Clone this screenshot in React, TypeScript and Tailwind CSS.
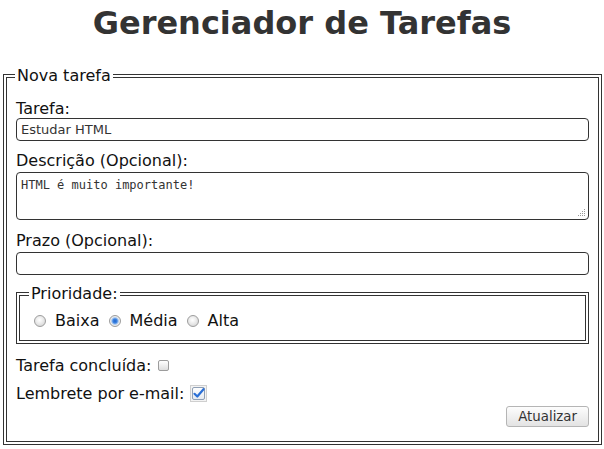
import React from "react";

function Radio({ checked }: { checked?: boolean }) {
  return (
    <span
      className={
        "inline-block w-[12px] h-[12px] shrink-0 rounded-full border border-[#9d9d9d] " +
        (checked
          ? "bg-[image:radial-gradient(circle,#1f63c9_0%,#3f86e4_30%,#9fc2ee_45%,#eeeeee_62%,#d2d2d2_100%)]"
          : "bg-[image:radial-gradient(circle_at_45%_40%,#ffffff_0%,#efefef_35%,#cdcdcd_100%)]")
      }
    />
  );
}

export default function App() {
  return (
    <div className="w-[604px] h-[449px] bg-white overflow-hidden font-['DejaVu_Sans',sans-serif] text-[16px] text-[#111]">
      <h1 className="pt-[5px] text-center text-[32px] leading-[37px] font-bold text-[#333]">
        Gerenciador de Tarefas
      </h1>
      <fieldset className="mt-[24px] ml-[3px] mr-[2px] border-4 border-double border-[#333] pl-[9px] pr-[9px] pt-[15px] pb-[14px]">
        <legend className="leading-[19px] px-[2px] -ml-[1px]">Nova tarefa</legend>

        <label className="block leading-[18px]">Tarefa:</label>
        <input
          type="text"
          defaultValue="Estudar HTML"
          className="block w-full h-[23px] border border-[#333] rounded-[4px] px-[4px] text-[13px] text-[#333] outline-none"
        />

        <label className="block leading-[18px] mt-[11px] mb-[2px]">Descrição (Opcional):</label>
        <div className="relative">
          <textarea
            defaultValue="HTML é muito importante!"
            className="block w-full h-[48px] border border-[#333] rounded-[4px] px-[4px] pt-[3px] font-['DejaVu_Sans_Mono',monospace] text-[12px] text-[#333] resize-none outline-none"
          />
          <svg className="absolute right-[3px] bottom-[3px]" width="9" height="9" viewBox="0 0 9 9">
            <g fill="#9a9a9a">
              <rect x="7" y="1" width="1" height="1" />
              <rect x="5" y="3" width="1" height="1" />
              <rect x="7" y="3" width="1" height="1" />
              <rect x="3" y="5" width="1" height="1" />
              <rect x="5" y="5" width="1" height="1" />
              <rect x="7" y="5" width="1" height="1" />
              <rect x="1" y="7" width="1" height="1" />
              <rect x="3" y="7" width="1" height="1" />
              <rect x="5" y="7" width="1" height="1" />
              <rect x="7" y="7" width="1" height="1" />
            </g>
          </svg>
        </div>

        <label className="block leading-[18px] mt-[12px] mb-[2px]">Prazo (Opcional):</label>
        <input
          type="text"
          className="block w-full h-[23px] border border-[#333] rounded-[4px] px-[4px] text-[13px] text-[#333] outline-none"
        />

        <fieldset className="mt-[9px] border-4 border-double border-[#333] pl-[10px] pr-[10px] pt-[8px] pb-[10px]">
          <legend className="leading-[19px] px-[2px] -ml-[1px]">Prioridade:</legend>
          <div className="flex items-center gap-[9px] leading-[19px] pl-[4px]">
            <Radio />
            <span>Baixa</span>
            <Radio checked />
            <span>Média</span>
            <Radio />
            <span>Alta</span>
          </div>
        </fieldset>

        <div className="flex items-center mt-[12px] leading-[19px]">
          <span>Tarefa concluída:</span>
          <span className="ml-[7px] inline-block w-[11px] h-[11px] rounded-[2px] border border-[#9c9c9c] bg-[image:linear-gradient(#ffffff,#dedede)]" />
        </div>

        <div className="flex items-center mt-[9px] leading-[19px]">
          <span>Lembrete por e-mail:</span>
          <svg className="ml-[6px]" width="17" height="17" viewBox="0 0 17 17">
            <defs>
              <linearGradient id="cbg" x1="0" y1="0" x2="0" y2="1">
                <stop offset="0" stopColor="#ffffff" />
                <stop offset="1" stopColor="#e4e9f0" />
              </linearGradient>
            </defs>
            <rect x="0.5" y="0.5" width="16" height="16" fill="#f3f3f3" stroke="#cfcfcf" />
            <rect x="2.5" y="2.5" width="12" height="12" rx="1.5" fill="url(#cbg)" stroke="#8f9fb5" />
            <path d="M4.5 8.8 L7.3 11.5 L13.5 4.2" fill="none" stroke="#2a6fd6" strokeWidth="2.2" strokeLinecap="round" strokeLinejoin="round" />
          </svg>
        </div>

        <div className="flex justify-end mt-[3px]">
          <button className="h-[21px] px-[11px] rounded-[3px] border border-[#b5b5b5] bg-[image:linear-gradient(#fdfdfd,#e3e3e3)] text-[13.33px] leading-[19px] text-[#333]">
            Atualizar
          </button>
        </div>
      </fieldset>
    </div>
  );
}
